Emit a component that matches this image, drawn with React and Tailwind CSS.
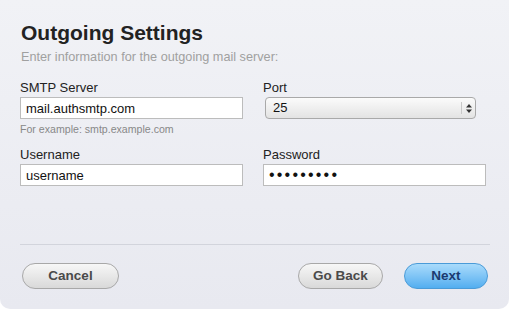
export default function App() {
  return (
    <div className="w-[510px] h-[311px] bg-white font-['Liberation_Sans',Arial,sans-serif]">
      <div className="h-[309px] w-[509px] rounded-b-[10px] bg-gradient-to-b from-[#f1f2f6] to-[#e8e9f0] px-[20px] pt-[21px]">
        <h1 className="text-[21px] font-bold leading-[24px] text-[#222] pl-[1px]">Outgoing Settings</h1>
        <p className="mt-[5px] text-[12.7px] leading-[14px] text-[#a0a0a0] pl-[1px]">Enter information for the outgoing mail server:</p>

        <div className="mt-[16px] grid grid-cols-[223px_223px] gap-x-[20px]">
          <div>
            <label className="block text-[13px] leading-[15px] text-[#222]">SMTP Server</label>
            <input
              className="mt-[2px] block h-[22px] w-[223px] border border-[#bcbcbc] bg-white px-[5px] text-[13px] text-[#111] outline-none"
              defaultValue="mail.authsmtp.com"
            />
            <p className="mt-[4px] text-[10.6px] leading-[12px] text-[#888]">For example: smtp.example.com</p>
          </div>
          <div>
            <label className="block text-[13px] leading-[15px] text-[#222]">Port</label>
            <div className="ml-[2px] mt-[2px] flex h-[22px] w-[211px] items-center rounded-[4px] border border-[#a9a9a9] bg-gradient-to-b from-[#fbfbfb] to-[#e3e3e3] pl-[7px] text-[13px] text-[#111]">
              <span className="flex-1">25</span>
              <div className="flex h-[12px] w-[14px] items-center justify-center border-l border-[#c8c8c8]">
                <svg width="6" height="9" viewBox="0 0 6 9">
                  <path d="M3 0 L6 3.5 L0 3.5 Z M0 5.5 L6 5.5 L3 9 Z" fill="#333" />
                </svg>
              </div>
            </div>
          </div>

          <div className="mt-[12px]">
            <label className="block text-[13px] leading-[15px] text-[#222]">Username</label>
            <input
              className="mt-[2px] block h-[22px] w-[223px] border border-[#bcbcbc] bg-white px-[5px] text-[13px] text-[#111] outline-none"
              defaultValue="username"
            />
          </div>
          <div className="mt-[12px]">
            <label className="block text-[13px] leading-[15px] text-[#222]">Password</label>
            <input
              type="password"
              className="mt-[2px] block h-[22px] w-[223px] border border-[#bcbcbc] bg-white px-[5px] text-[16px] tracking-[2.2px] text-[#111] outline-none"
              defaultValue="password1"
            />
          </div>
        </div>

        <div className="mt-[58px] h-px w-[470px] bg-[#d2d4dc]" />

        <div className="mt-[18px] flex items-center pl-[2px]">
          <button className="h-[26px] w-[97px] rounded-full border border-[#a8a8a8] bg-gradient-to-b from-[#f7f7f7] to-[#d9d9d9] text-[13.5px] font-bold text-[#4a4a4a]">
            Cancel
          </button>
          <div className="flex-1" />
          <button className="h-[26px] w-[85px] rounded-full border border-[#a8a8a8] bg-gradient-to-b from-[#f7f7f7] to-[#d9d9d9] text-[13.5px] font-bold text-[#4a4a4a]">
            Go Back
          </button>
          <button className="ml-[21px] mr-[1px] h-[26px] w-[84px] rounded-full border border-[#4a9bd8] bg-gradient-to-b from-[#a9dbfb] to-[#52aef0] text-[13.5px] font-bold text-[#1c3a70]">
            Next
          </button>
        </div>
      </div>
    </div>
  )
}
